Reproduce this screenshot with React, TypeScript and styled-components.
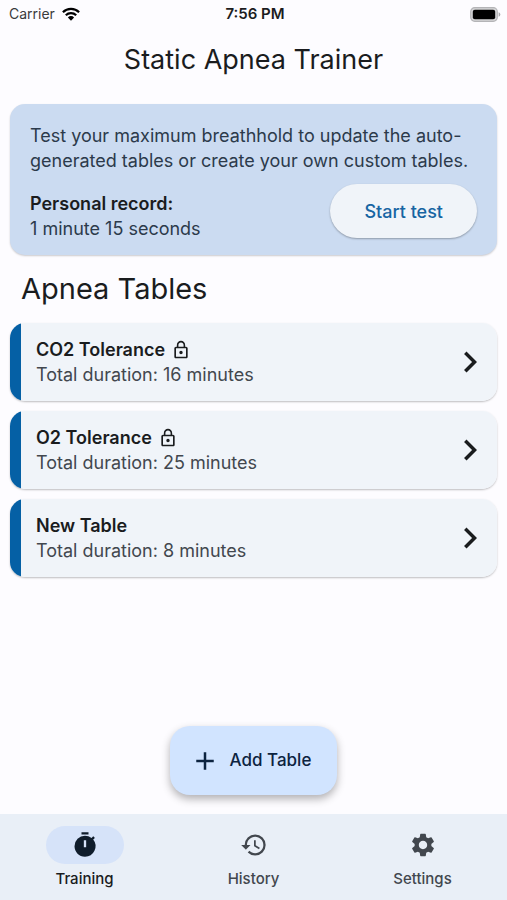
import React from "react";
import styled, { createGlobalStyle } from "styled-components";
import {
  MdAdd,
  MdChevronRight,
  MdHistory,
  MdLockOutline,
  MdSettings,
  MdTimer,
} from "react-icons/md";

const GlobalStyle = createGlobalStyle`
  *, *::before, *::after { box-sizing: border-box; }
  body {
    margin: 0;
    background: #fdfcff;
    color: #1a1c1e;
    font-family: Inter, Roboto, sans-serif;
    font-size: 18px;
    line-height: 25px;
  }
  button { font: inherit; border: 0; cursor: pointer; }
  h1, h2, p, ul { margin: 0; padding: 0; }
`;

const Screen = styled.div`
  display: flex;
  flex-direction: column;
  min-height: 100vh;
`;

const StatusBar = styled.div`
  display: grid;
  grid-template-columns: 1fr auto 1fr;
  align-items: center;
  height: 28px;
  padding: 0 6px 0 9px;
  font-size: 14px;
  line-height: 20px;
  color: #3a3a3c;
`;

const Carrier = styled.span`
  display: flex;
  align-items: center;
  gap: 7px;
`;

const Clock = styled.span`
  font-size: 15px;
  font-weight: 600;
  color: #1c1c1e;
`;

const BatteryIcon = styled.svg`
  justify-self: end;
`;

const AppTitle = styled.h1`
  padding: 14px 16px 0;
  font-size: 27px;
  font-weight: 400;
  line-height: 36px;
  text-align: center;
`;

const Content = styled.main`
  flex: 1;
  display: flex;
  flex-direction: column;
  padding: 26px 10px 19px;
`;

const RecordCard = styled.section`
  display: flex;
  flex-direction: column;
  gap: 11px;
  padding: 19px 20px 14px;
  border-radius: 15px;
  background: #cbdbf1;
  box-shadow: 0 1px 2px rgba(0, 0, 0, 0.2);
  color: #2c3a4b;
`;

const RecordRow = styled.div`
  display: flex;
  align-items: flex-start;
  justify-content: space-between;
  gap: 16px;
`;

const Record = styled.div`
  padding-top: 7px;
`;

const Strong = styled.strong`
  display: flex;
  align-items: center;
  gap: 6px;
  font-weight: 600;
  color: #1a1c1e;
`;

const StartButton = styled.button`
  height: 54px;
  padding: 0 34px;
  border-radius: 27px;
  background: #f0f4f9;
  box-shadow: 0 1px 2px rgba(0, 0, 0, 0.3);
  color: #1765a3;
  font-weight: 500;
  white-space: nowrap;
`;

const SectionTitle = styled.h2`
  padding: 15px 11px;
  font-size: 29px;
  font-weight: 400;
  line-height: 38px;
`;

const TableList = styled.ul`
  display: flex;
  flex-direction: column;
  gap: 10px;
  list-style: none;
`;

const TableCard = styled.button`
  display: flex;
  align-items: center;
  justify-content: space-between;
  width: 100%;
  padding: 14px 6px 14px 26px;
  border-radius: 15px;
  background: linear-gradient(to right, #0560a5 11px, #f0f4f9 11px);
  box-shadow: 0 1px 2px rgba(0, 0, 0, 0.25);
  color: #1a1c1e;
  text-align: left;
`;

const Duration = styled.span`
  display: block;
  color: #42474e;
`;

const AddButton = styled.button`
  display: flex;
  align-items: center;
  align-self: center;
  gap: 10px;
  height: 69px;
  margin-top: auto;
  padding: 0 26px 0 20px;
  border-radius: 20px;
  background: #d1e4ff;
  box-shadow: 0 4px 8px rgba(0, 0, 0, 0.3);
  color: #0c2340;
  font-size: 17px;
  font-weight: 500;
`;

const NavBar = styled.nav`
  position: sticky;
  bottom: 0;
  display: grid;
  grid-template-columns: repeat(3, 1fr);
  height: 86px;
  padding-top: 12px;
  background: #e9eff7;
`;

const NavItem = styled.button<{ $active?: boolean }>`
  display: flex;
  flex-direction: column;
  align-items: center;
  gap: 5px;
  padding: 0;
  background: none;
  color: ${(p) => (p.$active ? "#1a1c1e" : "#42474e")};
  font-size: 15px;
  font-weight: 500;
  line-height: 20px;
`;

const NavIcon = styled.span<{ $active?: boolean }>`
  display: grid;
  place-items: center;
  width: 78px;
  height: 38px;
  border-radius: 19px;
  background: ${(p) => (p.$active ? "#d6e3f9" : "transparent")};
  color: ${(p) => (p.$active ? "#0f1c2b" : "#42474e")};
`;

const tables = [
  { name: "CO2 Tolerance", minutes: 16, locked: true },
  { name: "O2 Tolerance", minutes: 25, locked: true },
  { name: "New Table", minutes: 8, locked: false },
];

const tabs = [
  { label: "Training", Icon: MdTimer },
  { label: "History", Icon: MdHistory },
  { label: "Settings", Icon: MdSettings },
];

function Wifi() {
  return (
    <svg width="18" height="14" viewBox="0 0 18 14" aria-label="Wi-Fi">
      <g fill="none" stroke="#000" strokeWidth="2.2">
        <path d="M0.9 5.2a11.5 11.5 0 0 1 16.2 0" />
        <path d="M3.8 8.3a7.4 7.4 0 0 1 10.4 0" />
      </g>
      <path d="M5.9 10.4a4.4 4.4 0 0 1 6.2 0L9 13.7z" fill="#000" />
    </svg>
  );
}

function Battery() {
  return (
    <BatteryIcon width="31" height="15" viewBox="0 0 31 15" aria-label="Battery full">
      <rect x="0.7" y="0.7" width="26.6" height="13.6" rx="4" fill="#d4d4d6" stroke="#b4b4b7" strokeWidth="1.2" />
      <rect x="2.8" y="2.8" width="22.4" height="9.4" rx="2" fill="#000" />
      <path d="M28.6 5.2v4.6a2.4 2.4 0 0 0 0-4.6z" fill="#a9a9ac" />
    </BatteryIcon>
  );
}

export default function App() {
  return (
    <Screen>
      <GlobalStyle />
      <StatusBar>
        <Carrier>
          Carrier <Wifi />
        </Carrier>
        <Clock>7:56 PM</Clock>
        <Battery />
      </StatusBar>
      <AppTitle>Static Apnea Trainer</AppTitle>
      <Content>
        <RecordCard>
          <p>
            Test your maximum breathhold to update the auto-generated tables or
            create your own custom tables.
          </p>
          <RecordRow>
            <Record>
              <Strong>Personal record:</Strong>
              <p>1 minute 15 seconds</p>
            </Record>
            <StartButton type="button">Start test</StartButton>
          </RecordRow>
        </RecordCard>
        <SectionTitle>Apnea Tables</SectionTitle>
        <TableList>
          {tables.map((t) => (
            <li key={t.name}>
              <TableCard type="button">
                <span>
                  <Strong>
                    {t.name}
                    {t.locked && <MdLockOutline size={20} aria-label="Locked" />}
                  </Strong>
                  <Duration>Total duration: {t.minutes} minutes</Duration>
                </span>
                <MdChevronRight size={42} aria-hidden />
              </TableCard>
            </li>
          ))}
        </TableList>
        <AddButton type="button">
          <MdAdd size={30} aria-hidden />
          Add Table
        </AddButton>
      </Content>
      <NavBar>
        {tabs.map(({ label, Icon }, i) => (
          <NavItem
            key={label}
            type="button"
            $active={i === 0}
            aria-current={i === 0 ? "page" : undefined}
          >
            <NavIcon $active={i === 0}>
              <Icon size={28} aria-hidden />
            </NavIcon>
            {label}
          </NavItem>
        ))}
      </NavBar>
    </Screen>
  );
}
